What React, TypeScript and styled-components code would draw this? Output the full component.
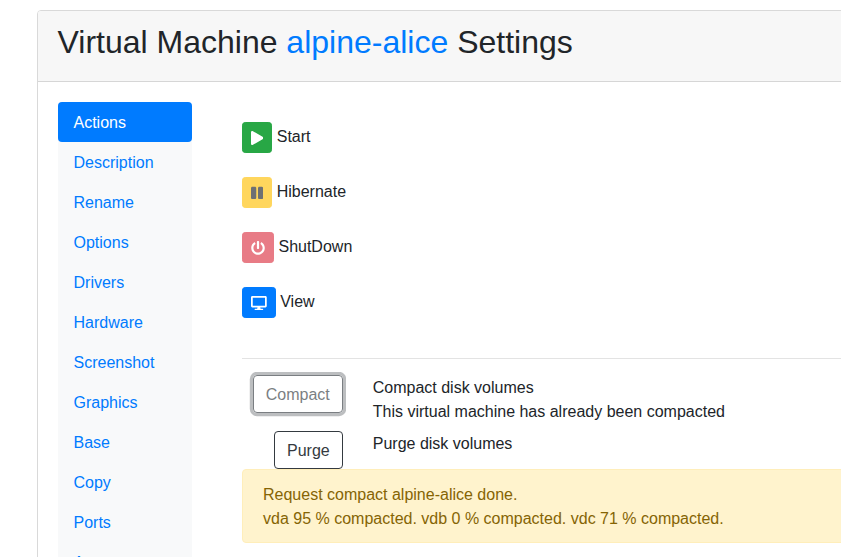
import React from "react";
import styled, { createGlobalStyle } from "styled-components";
import { FaPlay, FaPause, FaPowerOff, FaDesktop } from "react-icons/fa";

const GlobalStyle = createGlobalStyle`
  *, *::before, *::after { box-sizing: border-box; }
  html, body { margin: 0; height: 557px; overflow: hidden; }
  body {
    background: #fff;
    color: #212529;
    font: 400 16px/1.5 "Liberation Sans", Arial, sans-serif;
  }
`;

const Page = styled.main`
  height: 557px;
  overflow: hidden;
  padding: 10px 0 0 37px;
`;

const Card = styled.section`
  width: 1000px;
  height: 700px;
  border: 1px solid #d9d9d9;
  border-radius: 4px;
  overflow: hidden;
`;

const CardHeader = styled.header`
  height: 71.4px;
  padding: 12px 19.5px;
  background: #f7f7f7;
  border-bottom: 1px solid #d6d6d6;
`;

const Title = styled.h2`
  margin: 0;
  font-size: 32px;
  font-weight: 400;
  line-height: 38.4px;
`;

const Link = styled.a`
  color: #007bff;
  text-decoration: none;
`;

const CardBody = styled.div`
  display: flex;
  align-items: flex-start;
  gap: 50.25px;
  padding: 20px 20px 20px 19.75px;
`;

const Nav = styled.nav`
  display: flex;
  flex-direction: column;
  flex: none;
  width: 134px;
  background: #f8f9fa;
  border-radius: 4px;
`;

const NavLink = styled.a<{ $active?: boolean }>`
  padding: 9px 15.75px 7px;
  border-radius: 4px;
  color: ${(p) => (p.$active ? "#fff" : "#007bff")};
  background: ${(p) => (p.$active ? "#007bff" : "transparent")};
  text-decoration: none;
`;

const Content = styled.div`
  flex: 1;
  min-width: 0;
  padding-top: 20px;
`;

const ActionRow = styled.div`
  height: 55px;
`;

const IconButton = styled.button<{ $color: string; $glyph: number; $ink?: string; $faded?: boolean }>`
  padding: 5px 8px 3px;
  border: 1px solid ${(p) => p.$color};
  border-radius: 3.2px;
  background: ${(p) => p.$color};
  color: ${(p) => p.$ink ?? "#fff"};
  font: inherit;
  font-size: 14px;
  line-height: 21px;
  vertical-align: middle;
  opacity: ${(p) => (p.$faded ? 0.65 : 1)};

  svg {
    display: inline-block;
    height: 14px;
    width: ${(p) => p.$glyph}px;
    vertical-align: -1.75px;
  }
`;

const Divider = styled.hr`
  margin: 16px 0;
  border: 0;
  border-top: 1px solid #e3e3e3;
`;

const DiskRow = styled.div`
  display: grid;
  grid-template-columns: 100.75px 1fr;
  column-gap: 30px;
  min-height: 38px;
`;

const DiskRows = styled.div`
  display: flex;
  flex-direction: column;
  gap: 7px;
`;

const OutlineButton = styled.button<{ $focused?: boolean }>`
  justify-self: end;
  height: 38px;
  padding: 7px 12px 5px;
  border: 1px solid #343a40;
  border-radius: 4px;
  background: transparent;
  color: #343a40;
  font: inherit;
  opacity: ${(p) => (p.$focused ? 0.65 : 1)};
  box-shadow: ${(p) => (p.$focused ? "0 0 0 3.2px rgba(52, 58, 64, 0.5)" : "none")};
`;

const DiskText = styled.div`
  padding-top: 1px;
`;

const Alert = styled.div`
  padding: 13px 20px 11px;
  border: 1px solid #ffeeba;
  border-radius: 4px;
  background: #fff3cd;
  color: #856404;
`;

const sections = [
  "Actions", "Description", "Rename", "Options", "Drivers", "Hardware",
  "Screenshot", "Graphics", "Base", "Copy", "Ports", "Access",
];

const actions = [
  { label: "Start", color: "#28a745", glyph: 12.25, Icon: FaPlay },
  { label: "Hibernate", color: "#ffc107", ink: "#212529", faded: true, glyph: 12.25, Icon: FaPause },
  { label: "ShutDown", color: "#dc3545", faded: true, glyph: 14, Icon: FaPowerOff },
  { label: "View", color: "#007bff", glyph: 15.75, Icon: FaDesktop },
];

export default function App() {
  return (
    <>
      <GlobalStyle />
      <Page>
        <Card>
          <CardHeader>
            <Title>
              Virtual Machine <Link>alpine-alice</Link> Settings
            </Title>
          </CardHeader>
          <CardBody>
            <Nav>
              {sections.map((name, i) => (
                <NavLink key={name} $active={i === 0}>{name}</NavLink>
              ))}
            </Nav>
            <Content>
              {actions.map(({ label, color, glyph, ink, faded, Icon }) => (
                <ActionRow key={label}>
                  <IconButton $color={color} $glyph={glyph} $ink={ink} $faded={faded} disabled={faded} aria-label={label}>
                    <Icon />
                  </IconButton>{" "}
                  {label}
                </ActionRow>
              ))}
              <Divider />
              <DiskRows>
                <DiskRow>
                  <OutlineButton $focused>Compact</OutlineButton>
                  <DiskText>
                    Compact disk volumes
                    <br />
                    This virtual machine has already been compacted
                  </DiskText>
                </DiskRow>
                <DiskRow>
                  <OutlineButton>Purge</OutlineButton>
                  <DiskText>Purge disk volumes</DiskText>
                </DiskRow>
              </DiskRows>
              <Alert>
                Request compact alpine-alice done.
                <br />
                vda 95 % compacted. vdb 0 % compacted. vdc 71 % compacted.
              </Alert>
            </Content>
          </CardBody>
        </Card>
      </Page>
    </>
  );
}
